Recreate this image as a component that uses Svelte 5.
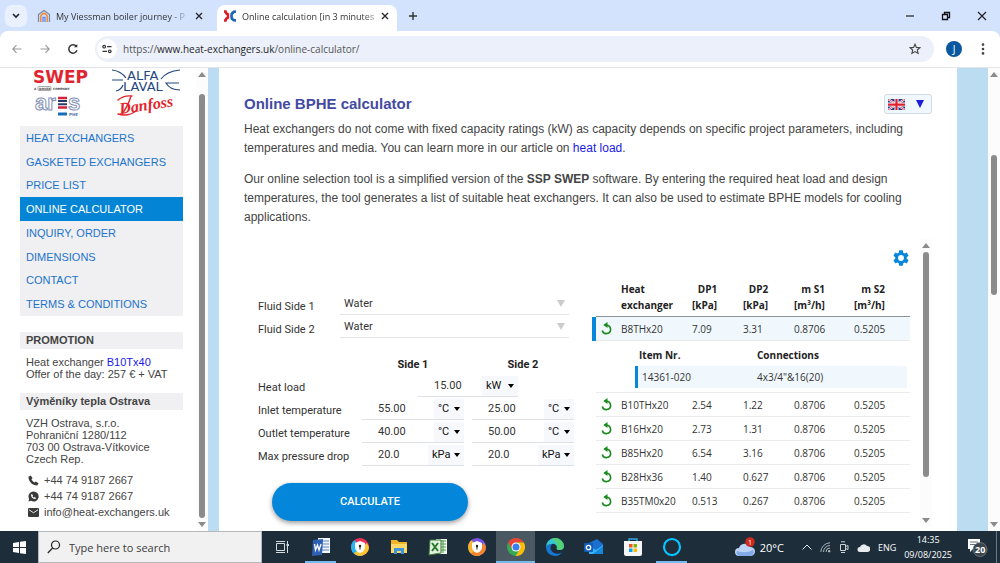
<script>
  let fluid1 = $state('Water');
  let fluid2 = $state('Water');
  let heatLoad = $state('15.00');
  let selected = $state('B8THx20');
  let query = $state('');

  let rows = $state([
    { label: 'Inlet temperature', unit: '°C', units: ['°C', '°F'], side1: '55.00', side2: '25.00' },
    { label: 'Outlet temperature', unit: '°C', units: ['°C', '°F'], side1: '40.00', side2: '50.00' },
    { label: 'Max pressure drop', unit: 'kPa', units: ['kPa', 'psi'], side1: '20.0', side2: '20.0' },
  ]);

  const menu = [
    'HEAT EXCHANGERS',
    'GASKETED EXCHANGERS',
    'PRICE LIST',
    'ONLINE CALCULATOR',
    'INQUIRY, ORDER',
    'DIMENSIONS',
    'CONTACT',
    'TERMS & CONDITIONS',
  ];

  const results = [
    { name: 'B8THx20', dp1: '7.09', dp2: '3.31', s1: '0.8706', s2: '0.5205', item: '14361-020', conn: '4x3/4"&16(20)' },
    { name: 'B10THx20', dp1: '2.54', dp2: '1.22', s1: '0.8706', s2: '0.5205' },
    { name: 'B16Hx20', dp1: '2.73', dp2: '1.31', s1: '0.8706', s2: '0.5205' },
    { name: 'B85Hx20', dp1: '6.54', dp2: '3.16', s1: '0.8706', s2: '0.5205' },
    { name: 'B28Hx36', dp1: '1.40', dp2: '0.627', s1: '0.8706', s2: '0.5205' },
    { name: 'B35TM0x20', dp1: '0.513', dp2: '0.267', s1: '0.8706', s2: '0.5205' },
  ];

  const apps = [
    { id: 'taskview', label: 'Task view' },
    { id: 'word', label: 'Word', open: true },
    { id: 'avast', label: 'Secure browser' },
    { id: 'files', label: 'File Explorer' },
    { id: 'excel', label: 'Excel' },
    { id: 'avg', label: 'Private browser' },
    { id: 'chrome', label: 'Chrome', open: true, active: true },
    { id: 'edge', label: 'Edge' },
    { id: 'outlook', label: 'Outlook' },
    { id: 'store', label: 'Store' },
    { id: 'alexa', label: 'Alexa', open: true },
  ];
</script>

{#snippet scrollbar(top, size)}
  <div class="scrollbar" aria-hidden="true">
    <svg width="8" height="5" viewBox="0 0 8 5"><path d="M4 0l4 5H0z" fill="#8b8b8b" /></svg>
    <div class="track">
      <div style="height: {top}%"></div>
      <div class="thumb" style="height: {size}%"></div>
    </div>
    <svg width="8" height="5" viewBox="0 0 8 5"><path d="M0 0h8L4 5z" fill="#8b8b8b" /></svg>
  </div>
{/snippet}

{#snippet closeIcon()}
  <svg width="8" height="8" viewBox="0 0 8 8"><path d="M1 1l6 6M7 1L1 7" stroke="#2b2b2b" stroke-width="1.4" /></svg>
{/snippet}

{#snippet unitField(row, side)}
  <div class="field">
    <input class="num" type="text" aria-label="{row.label}, {side}" bind:value={row[side]} />
    <div class="unit" class:wide={row.unit === 'kPa'}>
      <select aria-label="{row.label} unit, {side}" value={row.unit}>
        {#each row.units as u}<option>{u}</option>{/each}
      </select>
      <svg width="6" height="4" viewBox="0 0 6 4"><path d="M0 0h6L3 4z" /></svg>
    </div>
  </div>
{/snippet}

<div class="window">
  <header class="tabs">
    <button class="tab-search" aria-label="Search tabs">
      <svg width="8" height="6" viewBox="0 0 8 6"><path d="M1 1l3 3 3-3" fill="none" stroke="#222" stroke-width="1.6" /></svg>
    </button>
    <div class="tab">
      <svg width="14" height="14" viewBox="0 0 14 14" fill="none">
        <path d="M1.500 13V5.500L7 1.500l5.500 4V13" stroke="#7d8799" stroke-width="1.200" />
        <path d="M3.700 13V7.200Q7 1.500 10.300 7.200V13" stroke="#f08a3c" stroke-width="1.600" />
        <path d="M6 13V8.500h2V13" stroke="#5b8def" stroke-width="1.300" />
      </svg>
      <span class="tab-title">My Viessman boiler journey - P</span>
      <button class="bare" aria-label="Close tab">{@render closeIcon()}</button>
    </div>
    <div class="tab active">
      <svg width="14" height="12" viewBox="0 0 14 12" fill="none" stroke-width="2.600">
        <path d="M1 1.500h1.500Q3 4 5.500 4.500M1 10.500h1.500Q3 8 5.500 7.500M5 3.500v5" stroke="#d91f2a" />
        <path d="M13 1.500Q8.500 1.500 8.500 6t4.500 4.500M10.500 2.500L8 4.500M8 8l2.500 2" stroke="#1765b8" />
      </svg>
      <span class="tab-title">Online calculation [in 3 minutes</span>
      <button class="bare" aria-label="Close tab">{@render closeIcon()}</button>
    </div>
    <button class="bare new-tab" aria-label="New tab">
      <svg width="10" height="10" viewBox="0 0 10 10"><path d="M5 1v8M1 5h8" stroke="#333" stroke-width="1.400" /></svg>
    </button>
    <div class="controls">
      <button class="bare" aria-label="Minimise">
        <svg width="10" height="10" viewBox="0 0 10 10"><path d="M1 5h8" stroke="#222" stroke-width="1.200" /></svg>
      </button>
      <button class="bare" aria-label="Restore">
        <svg width="10" height="10" viewBox="0 0 10 10" fill="none" stroke="#111" stroke-width="1.300"><path d="M1.500 3.500h5v5h-5zM3.500 3V1.500h5v5H7" /></svg>
      </button>
      <button class="bare" aria-label="Close">
        <svg width="10" height="10" viewBox="0 0 10 10"><path d="M1 1l8 8M9 1L1 9" stroke="#222" stroke-width="1.200" /></svg>
      </button>
    </div>
  </header>

  <div class="toolbar">
    <button class="bare nav-btn" aria-label="Back">
      <svg width="10" height="10" viewBox="0 0 10 10" fill="none" stroke="#999" stroke-width="1.100"><path d="M9.500 5H1M4.500 1.200L.8 5l3.700 3.800" /></svg>
    </button>
    <button class="bare nav-btn" aria-label="Forward">
      <svg width="10" height="10" viewBox="0 0 10 10" fill="none" stroke="#999" stroke-width="1.100"><path d="M.5 5H9M5.500 1.200L9.200 5 5.500 8.800" /></svg>
    </button>
    <button class="bare nav-btn" aria-label="Reload">
      <svg width="12" height="12" viewBox="0 0 12 12" fill="none" stroke="#333" stroke-width="1.500"><path d="M10 7.300A4.200 4.200 0 1 1 9.300 3.300" /><path d="M10.300 1v3.300H7z" fill="#333" stroke="none" /></svg>
    </button>
    <div class="omnibox">
      <button class="site-info" aria-label="Site information">
        <svg width="10" height="10" viewBox="0 0 10 10" fill="none" stroke="#333" stroke-width="1.200"><circle cx="2.200" cy="2.700" r="1.300" /><path d="M5 2.700h4.500M.5 7.300H5" /><circle cx="7.800" cy="7.300" r="1.300" /></svg>
      </button>
      <span class="url">https://<b>www.heat-exchangers.uk</b>/online-calculator/</span>
      <button class="bare star" aria-label="Bookmark">
        <svg width="12" height="12" viewBox="0 0 12 12" fill="none" stroke="#444" stroke-width="1.100"><path d="M6 1.200l1.400 3.200 3.500.3-2.600 2.300.8 3.400L6 8.600l-3.100 1.800.8-3.400L1.100 4.700l3.500-.3z" /></svg>
      </button>
    </div>
    <button class="avatar" aria-label="Profile">J</button>
    <button class="bare" aria-label="Menu">
      <svg width="4" height="12" viewBox="0 0 4 12" fill="#444"><circle cx="2" cy="1.600" r="1.300" /><circle cx="2" cy="6" r="1.300" /><circle cx="2" cy="10.400" r="1.300" /></svg>
    </button>
  </div>

  <div class="page">
    <aside class="sidebar">
      <div class="side-content">
        <svg class="logos" width="163" height="58" viewBox="0 0 163 58">
          <text x="13" y="15" class="swep">SWEP</text>
          <text x="14" y="22" class="tiny">A</text>
          <rect x="18" y="18.500" width="13" height="4" rx="1" fill="none" stroke="#555" stroke-width=".5" />
          <text x="19" y="22" class="tiny">DOVER</text>
          <text x="33" y="22" class="tiny">COMPANY</text>
          <g fill="none" stroke="#24477f" stroke-width="1.200">
            <path d="M92 2q9 1 14 8M160 2q-13 1-19 9M92 12h11M96 23q5-1 7-6M160 22q-10 0-14-7h13" />
          </g>
          <text x="107" y="12" class="alfa">ALFA</text>
          <text x="103" y="23" class="alfa">LAVAL</text>
          <text x="15" y="42" class="ares">ar</text>
          <text x="48" y="42" class="ares">s</text>
          <path d="M38 30h9M38 39.500h9" stroke="#d2233c" stroke-width="2.600" />
          <path d="M38 33h9M38 36.200h9" stroke="#2c3568" stroke-width="2" />
          <path d="M38 46h9" stroke="#1670b8" stroke-width="3" />
          <text x="49" y="48" class="tiny blue">PHE</text>
          <g fill="none" stroke="#e2252b" stroke-linecap="round">
            <path d="M98 32q6-5 14-4M98 46q10 3 18-3M111 28q-3 10-9 18" stroke-width="1.400" />
          </g>
          <text x="100" y="46" class="danfoss" transform="rotate(-8 100 46)">Danfoss</text>
        </svg>

        <nav>
          {#each menu as item}
            <a href="#top" class:current={item === 'ONLINE CALCULATOR'}>{item}</a>
          {/each}
        </nav>

        <h2>PROMOTION</h2>
        <p class="promo">Heat exchanger <a href="#top">B10Tx40</a><br />Offer of the day: 257 € + VAT</p>

        <h2>Výměníky tepla Ostrava</h2>
        <address>
          VZH Ostrava, s.r.o.<br />Pohraniční 1280/112<br />703 00 Ostrava-Vítkovice<br />Czech Rep.
        </address>
        <ul class="contacts">
          <li>
            <svg width="11" height="11" viewBox="0 0 24 24" fill="#3a3a3a"><path d="M6 1L1 4c0 10 8 19 19 19l3-5-6-4-3 2.500C11 15 9 12.500 7.500 9.500L10 7z" /></svg>
            +44 74 9187 2667
          </li>
          <li>
            <svg width="11" height="11" viewBox="0 0 24 24"><path d="M12 1a11 11 0 0 0-9.500 16.500L1 23l5.700-1.500A11 11 0 1 0 12 1z" fill="#3a3a3a" /><path d="M8.500 6.500L6.500 8c0 5 4 9.500 9.500 9.500l1.500-2.500-3-1.700-1.500 1.400c-1.500-.8-2.500-1.800-3.200-3.200l1.200-1.500z" fill="#fff" /></svg>
            +44 74 9187 2667
          </li>
          <li>
            <svg width="11" height="9" viewBox="0 0 22 18"><rect width="22" height="18" rx="2" fill="#3a3a3a" /><path d="M2 3.500l9 6 9-6" fill="none" stroke="#fff" stroke-width="1.800" /></svg>
            info@heat-exchangers.uk
          </li>
        </ul>
      </div>
      {@render scrollbar(3, 97)}
    </aside>

    <main>
      <div class="title-row">
        <h1>Online BPHE calculator</h1>
        <button class="lang" aria-label="Language">
          <svg width="17" height="11" viewBox="0 0 34 22">
            <rect width="34" height="22" fill="#233a8e" />
            <path d="M0 0l34 22M34 0L0 22" stroke="#fff" stroke-width="4" />
            <path d="M0 0l34 22M34 0L0 22" stroke="#d8202f" stroke-width="1.500" />
            <path d="M17 0v22M0 11h34" stroke="#fff" stroke-width="8" />
            <path d="M17 0v22M0 11h34" stroke="#e0202f" stroke-width="4.500" />
          </svg>
          <svg width="8" height="8" viewBox="0 0 8 8"><path d="M0 0h8L4 8z" fill="#1d1de0" /></svg>
        </button>
      </div>
      <p>
        Heat exchangers do not come with fixed capacity ratings (kW) as capacity depends on specific
        project parameters, including temperatures and media. You can learn more in our article on
        <a href="#top">heat load</a>.
      </p>
      <p>
        Our online selection tool is a simplified version of the <strong>SSP SWEP</strong> software. By
        entering the required heat load and design temperatures, the tool generates a list of suitable
        heat exchangers. It can also be used to estimate BPHE models for cooling applications.
      </p>

      <section class="calc">
        <form onsubmit={(e) => e.preventDefault()}>
          <div class="fluids">
            <label for="fluid1">Fluid Side 1</label>
            <div class="fluid">
              <select id="fluid1" bind:value={fluid1}><option>Water</option><option>Ethylene glycol</option></select>
              <svg width="8" height="7" viewBox="0 0 8 7"><path d="M0 0h8L4 7z" fill="#ccc" /></svg>
            </div>
            <label for="fluid2">Fluid Side 2</label>
            <div class="fluid">
              <select id="fluid2" bind:value={fluid2}><option>Water</option><option>Ethylene glycol</option></select>
              <svg width="8" height="7" viewBox="0 0 8 7"><path d="M0 0h8L4 7z" fill="#ccc" /></svg>
            </div>
          </div>

          <div class="params">
            <span></span>
            <strong>Side 1</strong>
            <strong>Side 2</strong>
            <label for="heat-load">Heat load</label>
            <div class="field shared">
              <input id="heat-load" class="num" type="text" bind:value={heatLoad} />
              <div class="unit wide">
                <select aria-label="Heat load unit"><option>kW</option><option>W</option></select>
                <svg width="6" height="4" viewBox="0 0 6 4"><path d="M0 0h6L3 4z" /></svg>
              </div>
            </div>
            {#each rows as row}
              <span class="param-label">{row.label}</span>
              {@render unitField(row, 'side1')}
              {@render unitField(row, 'side2')}
            {/each}
          </div>

          <button type="submit" class="calculate">CALCULATE</button>
        </form>

        <div class="results">
          <button class="bare gear" aria-label="Settings">
            <svg width="16" height="16" viewBox="2 2 20 20" fill="#0787da"><path d="M19.140 12.940c.04-.3.060-.61.060-.94 0-.32-.02-.64-.07-.94l2.030-1.580a.49.49 0 0 0 .12-.61l-1.920-3.320a.49.49 0 0 0-.59-.22l-2.390.96c-.5-.38-1.030-.7-1.620-.94l-.36-2.540a.48.48 0 0 0-.48-.41h-3.840c-.24 0-.43.17-.47.41l-.36 2.540c-.59.24-1.130.57-1.620.94l-2.390-.96a.48.48 0 0 0-.59.22L2.740 8.870c-.12.21-.08.47.12.61l2.030 1.580c-.05.3-.09.63-.09.94s.02.64.07.94l-2.030 1.580a.49.49 0 0 0-.12.61l1.920 3.320c.12.22.37.29.59.22l2.390-.96c.5.38 1.030.7 1.620.94l.36 2.540c.05.24.24.41.48.41h3.840c.24 0 .44-.17.47-.41l.36-2.540c.59-.24 1.130-.56 1.620-.94l2.390.96c.22.08.47 0 .59-.22l1.920-3.320c.12-.22.07-.47-.12-.61zM12 15.600A3.600 3.600 0 1 1 12 8.400a3.600 3.600 0 0 1 0 7.200z" /></svg>
          </button>
          <table>
            <thead>
              <tr>
                <th class="c-icon"></th>
                <th class="c-name">Heat<br />exchanger</th>
                <th class="c-dp"><div>DP1<br />[kPa]</div></th>
                <th class="c-dp"><div>DP2<br />[kPa]</div></th>
                <th class="c-flow"><div>m S1<br />[m³/h]</div></th>
                <th><div>m S2<br />[m³/h]</div></th>
              </tr>
            </thead>
            <tbody>
              {#each results as r}
                <tr class:selected={r.name === selected} onclick={() => (selected = r.name)}>
                  <td class="c-icon">
                    <svg width="12" height="13" viewBox="0 0 12 13" fill="none" stroke="#188a1c" stroke-width="1.600"><path d="M5.500 3.200a4.200 4.200 0 1 1-4.200 5.300" /><path d="M6.500 0v6L2.300 3z" fill="#188a1c" stroke="none" /></svg>
                  </td>
                  <td>{r.name}</td>
                  <td>{r.dp1}</td>
                  <td>{r.dp2}</td>
                  <td>{r.s1}</td>
                  <td>{r.s2}</td>
                </tr>
                {#if r.item && r.name === selected}
                  <tr class="detail">
                    <td colspan="6">
                      <table class="items">
                        <thead><tr><th class="c-item">Item Nr.</th><th>Connections</th></tr></thead>
                        <tbody><tr><td>{r.item}</td><td>{r.conn}</td></tr></tbody>
                      </table>
                    </td>
                  </tr>
                {/if}
              {/each}
            </tbody>
          </table>
        </div>
        {@render scrollbar(0, 86)}
      </section>
    </main>
    {@render scrollbar(17, 32)}
  </div>

  <footer class="taskbar">
    <button class="start" aria-label="Start">
      <svg width="13" height="13" viewBox="0 0 13 13" fill="#fff"><path d="M0 2l6-1v5H0zM7 .8L13 0v6H7zM0 7h6v5l-6-1zM7 7h6v6l-6-.8z" /></svg>
    </button>
    <label class="search">
      <svg width="14" height="14" viewBox="0 0 14 14" fill="none" stroke="#222" stroke-width="1.200"><circle cx="8.500" cy="5" r="4" /><path d="M5.600 8L.8 13" /></svg>
      <input type="text" placeholder="Type here to search" aria-label="Search" bind:value={query} />
    </label>
    <div class="apps">
      {#each apps as app}
        <button class="app" class:open={app.open} class:active={app.active} aria-label={app.label}>
          <svg width="20" height="20" viewBox="0 0 20 20">
            {#if app.id === 'taskview'}
              <g fill="none" stroke="#d5dade"><path d="M4.500 6.500h8v7h-8zM4 4.500h9M4 15.500h9M15.500 4v12" /><path d="M14.500 8h2.500" stroke-width="2" /></g>
            {:else if app.id === 'word'}
              <path d="M7 1h12v15H7z" fill="#f2f6fc" /><path d="M10 4h8M10 7h8M10 10h8M10 13h8" stroke="#5c86c6" />
              <path d="M2 3l10-1-1 16-10 1z" fill="#2f5fb3" /><path d="M3.500 7l1 6 2-5 1.500 5 2-6" fill="none" stroke="#fff" stroke-width="1.300" />
            {:else if app.id === 'avast' || app.id === 'avg'}
              <circle cx="10" cy="10" r="9" fill={app.id === 'avast' ? '#ef3157' : '#7b52e8'} />
              <path d="M1 10a9 9 0 0 0 12 8.500L5 3A9 9 0 0 0 1 10z" fill={app.id === 'avast' ? '#27b5f0' : '#f7b32e'} />
              <path d="M4 16.500a9 9 0 0 0 15-6.500l-2-4z" fill={app.id === 'avast' ? '#ffc531' : '#f7832e'} />
              <path d="M10 4l5 2v4q0 4-5 6-5-2-5-6V6z" fill="#fff" /><circle cx="10" cy="9" r="1.200" fill="#222" /><path d="M10 9v3.500" stroke="#222" />
            {:else if app.id === 'files'}
              <path d="M2 3h6l2 2h8v11H2z" fill="#f0b429" /><path d="M2 7h16v9H2z" fill="#ffd865" /><path d="M5 17v-6h10v6h-3v-3H8v3z" fill="#3d95dc" />
            {:else if app.id === 'excel'}
              <path d="M8 2h11v15H8z" fill="#eff7ec" /><path d="M12 4h6M12 7h6M12 10h6M12 13h6M15 3v13" stroke="#4f9c4a" />
              <path d="M2 3h11v13l-12 2z" fill="#e5f1e0" stroke="#3a7d34" /><path d="M4 6l6 8M10 6l-6 8" stroke="#287a2b" stroke-width="2" />
            {:else if app.id === 'chrome'}
              <circle cx="10" cy="10" r="9" fill="#34a853" />
              <path d="M2.200 5.500A9 9 0 0 1 17.800 5.500H10L6 12z" fill="#ea4335" /><path d="M17.800 5.500A9 9 0 0 1 9.500 19l4.500-7-2-6.500z" fill="#fbbc05" />
              <circle cx="10" cy="10" r="4.500" fill="#fff" /><circle cx="10" cy="10" r="3.500" fill="#3b7ded" />
            {:else if app.id === 'edge'}
              <path d="M1 11A9 9 0 0 1 19 9q0 4-5 4-3-.5-2-2.500Q11 6 6.500 7 2 8 1 11z" fill="#37c6d0" /><path d="M10 1a9 9 0 0 1 9 8q0 4-5 4-3-.5-2-2.500Q13 4 6 2z" fill="#52d277" />
              <path d="M1 11Q2 6.500 7 7q-3 4 0 7.500 4 4 10 1A9 9 0 0 1 1 11z" fill="#1477d1" />
            {:else if app.id === 'outlook'}
              <path d="M5 6l8-4 6 5v9H5z" fill="#1b6fd0" /><path d="M5 9l7 4 7-5v9H5z" fill="#36b4f4" /><path d="M9 17l10-8v8z" fill="#1787dd" />
              <rect x="0" y="6" width="9" height="9" rx="1" fill="#0f5db5" /><circle cx="4.500" cy="10.500" r="2.200" fill="none" stroke="#fff" stroke-width="1.300" />
            {:else if app.id === 'store'}
              <path d="M6 5V2h8v3" fill="none" stroke="#35a5df" stroke-width="1.400" /><path d="M1 4h18v13q0 2-2 2H3q-2 0-2-2z" fill="#f5f5f5" />
              <path d="M6 7h3.500v3.500H6z" fill="#f25022" /><path d="M10.500 7H14v3.500h-3.500z" fill="#7fba00" /><path d="M6 11.500h3.500V15H6z" fill="#00a4ef" /><path d="M10.500 11.500H14V15h-3.500z" fill="#ffb900" />
            {:else}
              <circle cx="10" cy="10" r="8" fill="none" stroke="#08c4ff" stroke-width="2.200" /><path d="M8 17l2 2.500 3-2.500z" fill="#08c4ff" />
            {/if}
          </svg>
        </button>
      {/each}
    </div>
    <div class="tray">
      <svg width="21" height="21" viewBox="0 0 21 21">
        <path d="M4 19a4 4 0 0 1 0-8 6 6 0 0 1 11-1 4.500 4.500 0 0 1 1 9z" fill="#bcd3f7" /><path d="M4 19a3.500 3.500 0 0 1-2-5q9 3 16-1a4 4 0 0 1-2 6z" fill="#84a9e8" />
        <circle cx="15" cy="5" r="4.800" fill="#cf2a1e" /><text x="13" y="8" class="badge">1</text>
      </svg>
      <span class="temp">20°C</span>
      <svg width="10" height="6" viewBox="0 0 10 6"><path d="M.5 5.500L5 1l4.500 4.500" fill="none" stroke="#e5e8ea" /></svg>
      <svg width="11" height="11" viewBox="0 0 11 11" fill="none" stroke="#aeb5ba"><path d="M.8 10A9.500 9.500 0 0 1 10 .8M3.500 10A6.500 6.500 0 0 1 10 3.500M6 10A4 4 0 0 1 10 6" /><circle cx="9.200" cy="9.200" r=".8" fill="#fff" /></svg>
      <svg width="10" height="12" viewBox="0 0 10 12" fill="none" stroke="#cdd2d6"><path d="M1.500 3.500h5v6h-5zM6.500 5.500l2.500-1v4l-2.500-1M2 .8h4M2 11.500h4" /></svg>
      <svg width="13" height="9" viewBox="0 0 13 9"><path d="M3 9a2.500 2.500 0 0 1 0-5 4 4 0 0 1 7-1 3 3 0 0 1 .5 6z" fill="#e9ecee" /></svg>
      <span>ENG</span>
      <time>14:35<br />09/08/2025</time>
      <button class="bare" aria-label="Notifications">
        <svg width="21" height="20" viewBox="0 0 21 20">
          <path d="M1 2h12v10H6l-3 3v-3H1z" fill="#fff" /><path d="M3 5h8M3 7.500h8" stroke="#67727b" />
          <circle cx="13" cy="12.500" r="7" fill="#3d464d" stroke="#8c9398" stroke-width=".6" /><text x="8" y="16" class="count">20</text>
        </svg>
      </button>
      <span class="desktop"></span>
    </div>
  </footer>
</div>

<style>
  :global(body) {
    margin: 0;
  }

  .window {
    display: flex;
    flex-direction: column;
    height: 100vh;
    overflow: hidden;
    background: #d3e2fd;
    font-family: "Open Sans", "Noto Sans", sans-serif;
    font-size: 10px;
    color: #333;
  }

  svg {
    display: block;
    flex-shrink: 0;
  }

  button, input, select {
    font: inherit;
    color: inherit;
  }

  button {
    cursor: pointer;
  }

  a {
    color: #1a1ae6;
    text-decoration: none;
  }

  .bare {
    display: flex;
    padding: 0;
    border: none;
    background: none;
  }

  .tabs {
    flex: none;
    display: flex;
    align-items: center;
    height: 31px;
    padding-left: 5px;
  }

  .tab-search {
    display: grid;
    place-items: center;
    width: 22px;
    height: 22px;
    padding: 0;
    border: none;
    border-radius: 7px;
    background: #eaf1fe;
  }

  .tab {
    display: flex;
    align-items: center;
    gap: 5px;
    box-sizing: border-box;
    width: 180px;
    height: 26px;
    margin-top: 5px;
    margin-left: 4px;
    padding: 0 8px 4px 6px;
    border-radius: 8px 8px 0 0;
    font-size: 9px;
  }

  .tab.active {
    background: #fff;
    margin-left: 6px;
  }

  .tab-title {
    flex: 1;
    white-space: nowrap;
    mask-image: linear-gradient(to right, #000 85%, transparent);
  }

  .active .tab-title {
    mask-image: linear-gradient(to right, #000 90%, rgba(0, 0, 0, 0.4));
  }

  .new-tab {
    margin-left: 11px;
  }

  .controls {
    display: flex;
    gap: 26px;
    margin-left: auto;
    padding-right: 13px;
  }

  .toolbar {
    flex: none;
    display: flex;
    align-items: center;
    height: 36px;
    padding-right: 15px;
    border-bottom: 1px solid #e3e5e8;
    border-radius: 8px 8px 0 0;
    background: #fff;
  }

  .nav-btn {
    justify-content: center;
    width: 28px;
  }

  .nav-btn:first-child {
    margin-left: 3px;
  }

  .omnibox {
    flex: 1;
    display: flex;
    align-items: center;
    height: 26px;
    margin: 0 12px 0 8px;
    border-radius: 13px;
    background: #ebf0fa;
  }

  .site-info {
    display: grid;
    place-items: center;
    width: 20px;
    height: 20px;
    margin: 0 6px 0 2px;
    padding: 0;
    border: none;
    border-radius: 50%;
    background: #fff;
  }

  .url {
    flex: 1;
    color: #555;
  }

  .url b {
    font-weight: 400;
    color: #1f1f1f;
  }

  .star {
    margin-right: 13px;
  }

  .avatar {
    width: 16px;
    height: 16px;
    margin-right: 19px;
    padding: 0;
    border: none;
    border-radius: 50%;
    background: #08579f;
    color: #fff;
    line-height: 16px;
  }

  .page {
    flex: 1;
    display: flex;
    min-height: 0;
    overflow: hidden;
    background: #fff;
  }

  .scrollbar {
    flex: none;
    display: flex;
    flex-direction: column;
    align-items: center;
    justify-content: space-between;
    gap: 4px;
    box-sizing: border-box;
    width: 12px;
    padding: 4px 0;
    background: #fcfcfc;
  }

  .track {
    flex: 1;
    width: 6px;
  }

  .thumb {
    border-radius: 3px;
    background: #8b8b8b;
  }

  .sidebar {
    flex: none;
    display: flex;
    width: 208px;
    font-family: "Liberation Sans", Arial, sans-serif;
    font-size: 11px;
    line-height: 12px;
    color: #444;
  }

  .side-content {
    flex: 1;
    margin: 0 13px 0 20px;
  }

  .logos text {
    font-family: "DejaVu Sans", sans-serif;
  }

  .logos .swep {
    font-size: 17px;
    font-weight: 700;
    fill: #df2630;
  }

  .logos .tiny {
    font-size: 3px;
    font-weight: 700;
    fill: #444;
  }

  .logos .blue {
    font-size: 4px;
    fill: #5a78ab;
  }

  .logos .alfa {
    font-size: 13px;
    fill: #24477f;
  }

  .logos .ares {
    font-family: "Liberation Sans", sans-serif;
    font-size: 22px;
    font-weight: 700;
    fill: #fff;
    stroke: #8390b5;
    stroke-width: 1;
  }

  .logos .danfoss {
    font-family: "Liberation Serif", serif;
    font-size: 16px;
    font-weight: 700;
    font-style: italic;
    fill: #e2252b;
  }

  nav {
    display: grid;
    grid-auto-rows: 1fr;
    height: 190px;
    margin-bottom: 16px;
    background: #f0f0f2;
  }

  nav a {
    display: flex;
    align-items: center;
    padding-left: 6px;
    color: #1c73cc;
  }

  nav a.current {
    background: #0484d4;
    color: #fff;
  }

  h2 {
    margin: 0;
    padding-left: 6px;
    background: #f0f0f2;
    font-size: 11px;
    line-height: 17px;
  }

  .promo {
    margin: 7px 0 13px 6px;
  }

  address {
    margin: 7px 0 7px 6px;
    font-style: normal;
  }

  .contacts {
    margin: 0;
    padding-left: 8px;
    list-style: none;
    line-height: 16px;
  }

  .contacts li {
    display: flex;
    align-items: center;
    gap: 5px;
  }

  main {
    flex: 1;
    display: flex;
    flex-direction: column;
    min-width: 0;
    padding: 26px 25px 4px;
    border-left: 11px solid #bbdcf1;
    border-right: 31px solid #bbdcf1;
    font-family: "Liberation Sans", Arial, sans-serif;
    font-size: 12px;
    line-height: 19px;
    color: #444;
  }

  main p {
    margin: 0 0 12px;
  }

  .title-row {
    display: flex;
    align-items: center;
    justify-content: space-between;
    margin-bottom: 6px;
  }

  h1 {
    margin: 0;
    font-size: 15px;
    line-height: 20px;
    color: #444aa3;
  }

  .lang {
    display: flex;
    align-items: center;
    justify-content: space-between;
    box-sizing: border-box;
    width: 48px;
    height: 20px;
    padding: 0 7px 0 3px;
    border: 1px solid #d3dde6;
    border-radius: 3px;
    background: #f0f7fd;
  }

  .calc {
    flex: 1;
    display: flex;
    min-height: 0;
    overflow: hidden;
    color: #333;
  }

  form {
    flex: none;
    box-sizing: border-box;
    width: 330px;
    padding: 54px 0 0 14px;
    font-family: Roboto, sans-serif;
    font-size: 11px;
    line-height: 16px;
  }

  select {
    appearance: none;
    min-width: 0;
    padding: 0 4px;
    border: none;
    border-radius: 0;
    background: transparent;
  }

  input {
    min-width: 0;
    border: none;
    background: transparent;
    outline: none;
  }

  .fluids {
    display: grid;
    grid-template-columns: 82px 1fr;
    row-gap: 1px;
    margin-right: 5px;
  }

  label, .param-label {
    padding-top: 4px;
  }

  .fluids label {
    padding-top: 6px;
  }

  .fluid {
    display: grid;
    grid-template-columns: 1fr 8px;
    align-items: center;
    box-sizing: border-box;
    height: 22px;
    padding-right: 4px;
    border-bottom: 1px solid #e2e4e8;
  }

  .params {
    display: grid;
    grid-template-columns: 96px minmax(0, 1fr) minmax(0, 1fr);
    gap: 2px 8px;
    margin: 18px 0 17px;
  }

  .params strong {
    text-align: center;
    line-height: 18px;
    color: #222;
  }

  .field {
    display: flex;
    box-sizing: border-box;
    height: 21px;
    border-bottom: 1px solid #dde1e6;
  }

  .shared {
    grid-column: span 2;
    justify-self: center;
    width: 100px;
  }

  .num {
    flex: 1;
    width: 0;
    padding: 0 0 0 16px;
  }

  .unit {
    display: grid;
    grid-template-columns: 1fr 6px;
    align-items: center;
    width: 26px;
    padding-right: 4px;
    background: #f7f8fb;
    color: #111;
  }

  .unit.wide {
    width: 32px;
  }

  .unit select {
    padding: 0 0 0 4px;
  }

  .calculate {
    width: 196px;
    height: 38px;
    margin-left: 14px;
    border: none;
    border-radius: 19px;
    background: #0487da;
    box-shadow: 0 2px 5px rgba(0, 0, 0, 0.4);
    color: #fff;
    font-weight: 500;
  }

  .results {
    flex: 1;
    min-width: 0;
    margin-right: 9px;
    padding: 11px 1px 0 22px;
    font-family: "Open Sans", "Noto Sans", sans-serif;
    font-size: 10px;
    line-height: 16px;
  }

  .gear {
    margin: 0 1px 15px auto;
  }

  table {
    width: 100%;
    border-collapse: separate;
    border-spacing: 0;
    table-layout: fixed;
  }

  th {
    padding: 0 0 3px;
    border-bottom: 1px solid #8b9196;
    text-align: left;
    font-weight: 700;
    color: #222;
  }

  th div {
    width: fit-content;
    text-align: right;
  }

  td {
    height: 23px;
    padding: 0;
    border-bottom: 1px solid #e8eaec;
  }

  .c-icon {
    width: 25px;
  }

  td.c-icon {
    padding-left: 5px;
    box-sizing: border-box;
  }

  .c-name {
    width: 71px;
  }

  .c-dp {
    width: 51px;
  }

  .c-flow {
    width: 60px;
  }

  .c-item {
    width: 114px;
  }

  .selected td {
    background: #f0f8fd;
  }

  .selected td:first-child {
    box-shadow: -4px 0 #0787da;
  }

  .detail > td {
    padding: 6px 3px 4px 39px;
  }

  .items th {
    padding: 0 0 3px 4px;
    border: none;
  }

  .items td {
    height: 22px;
    padding-left: 4px;
    border: none;
    background: #f0f8fd;
  }

  .items td:first-child {
    border-left: 3px solid #0787da;
  }

  .taskbar {
    flex: none;
    display: flex;
    height: 32px;
    background: #1d2e3a;
    color: #fff;
  }

  .start {
    display: grid;
    place-items: center;
    width: 38px;
    padding: 0;
    border: none;
    background: none;
  }

  .search {
    display: flex;
    align-items: center;
    gap: 8px;
    box-sizing: border-box;
    width: 224px;
    padding: 0 0 0 8px;
    border: 1px solid #b5b8ba;
    background: #f1f1f1;
    color: #333;
    font-size: 11px;
  }

  .search input {
    flex: 1;
    padding: 0;
  }

  .search input::placeholder {
    color: #3c3c3c;
  }

  .apps {
    display: flex;
  }

  .app {
    display: grid;
    place-items: center;
    width: 39px;
    padding: 0;
    border: none;
    background: linear-gradient(#76b9ed, #76b9ed) center bottom / 0 2px no-repeat;
  }

  .app.open {
    background-size: 31px 2px;
  }

  .app.active {
    background-color: #4a5862;
    background-size: 100% 2px;
  }

  .tray {
    display: flex;
    align-items: center;
    gap: 8px;
    margin-left: auto;
    font-size: 9px;
  }

  .temp {
    margin: 0 10px 0 -4px;
    font-size: 11px;
  }

  time {
    margin-right: 7px;
    line-height: 15px;
    text-align: center;
  }

  .badge, .count {
    font-size: 7px;
    fill: #fff;
  }

  .count {
    font-size: 9px;
    font-weight: 700;
  }

  .desktop {
    align-self: stretch;
    width: 3px;
    border-left: 1px solid #6d7880;
  }
</style>
